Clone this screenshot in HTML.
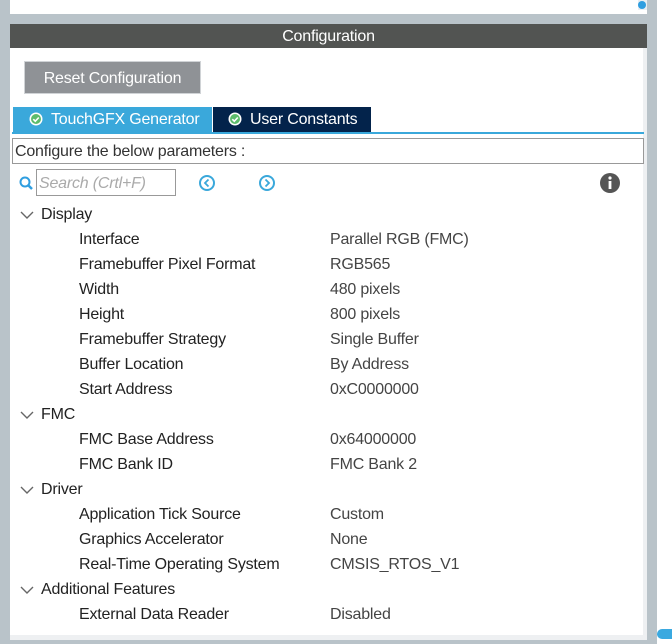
<!DOCTYPE html>
<html><head><style>
body{margin:0;width:672px;height:644px;background:#b9c3c9;position:relative;overflow:hidden;font-family:"Liberation Sans",sans-serif;}
.a{position:absolute}
.row{position:absolute;font-size:16px;color:#222;white-space:nowrap;line-height:18px;letter-spacing:-0.2px}
</style></head><body>
<div class="a" style="left:10px;top:0;width:637px;height:14px;background:#fff"></div>
<div class="a" style="left:638px;top:0;width:9px;height:10px;background:#e8eef2"></div>
<div class="a" style="left:638px;top:1px;width:8px;height:8px;border-radius:50%;background:#2f9ee0"></div>
<div class="a" style="left:657px;top:0;width:15px;height:644px;background:#fff"></div>
<div class="a" style="left:657px;top:629px;width:15px;height:10px;border-radius:5px 0 0 5px;background:#3aa9e0"></div>
<div class="a" style="left:10px;top:24px;width:637px;height:24px;background:#525452;color:#fff;font-size:16px;text-align:center;line-height:26px;letter-spacing:-0.2px">Configuration</div>
<div class="a" style="left:10px;top:48px;width:637px;height:587px;background:#fff"></div>
<div class="a" style="left:10px;top:635px;width:637px;height:5px;background:#eef0f2"></div>
<div class="a" style="left:643px;top:48px;width:4px;height:587px;background:#eef0f2"></div>
<div class="a" style="left:24px;top:61px;width:177px;height:33px;background:#8f9296;border:1px solid #d0d3d6;box-sizing:border-box;color:#fff;font-size:16px;line-height:33px;text-align:center;letter-spacing:-0.2px">Reset Configuration</div>
<div class="a" style="left:13px;top:107px;width:199px;height:25px;background:#3aa8db;color:#fff;font-size:16px;line-height:26px;letter-spacing:-0.2px"><svg width="14" height="14" style="margin:0 8px 0 16px;vertical-align:-2px"><circle cx="7" cy="7" r="6.5" fill="#fff"/><circle cx="7" cy="7" r="5" fill="#5cbc6c"/><path d="M4.3 7.2l2 2 3.5-3.7" fill="none" stroke="#fff" stroke-width="1.6"/></svg>TouchGFX Generator</div>
<div class="a" style="left:213px;top:107px;width:158px;height:25px;background:#03234b;color:#fff;font-size:16px;line-height:26px;letter-spacing:-0.2px"><svg width="14" height="14" style="margin:0 8px 0 15px;vertical-align:-2px"><circle cx="7" cy="7" r="6.5" fill="#fff"/><circle cx="7" cy="7" r="5" fill="#5cbc6c"/><path d="M4.3 7.2l2 2 3.5-3.7" fill="none" stroke="#fff" stroke-width="1.6"/></svg>User Constants</div>
<div class="a" style="left:12px;top:132px;width:632px;height:2px;background:#3aa8db"></div>
<div class="a" style="left:12px;top:138px;width:632px;height:26px;border:1px solid #999;box-sizing:border-box;font-size:16px;color:#333;line-height:26px;padding-left:2px;letter-spacing:-0.2px">Configure the below parameters :</div>
<svg class="a" style="left:19px;top:176px" width="16" height="16"><circle cx="6" cy="6" r="4.5" fill="none" stroke="#2f9ee0" stroke-width="2"/><line x1="9" y1="9" x2="13" y2="13" stroke="#2f9ee0" stroke-width="2.5"/></svg>
<div class="a" style="left:36px;top:169px;width:140px;height:27px;border:1px solid #999;box-sizing:border-box;font-size:16px;color:#aaa;font-style:italic;line-height:27px;padding-left:2px;letter-spacing:-0.2px">Search (Crtl+F)</div>
<svg class="a" style="left:198px;top:174px" width="18" height="18"><circle cx="9" cy="9" r="7" fill="none" stroke="#3aa8db" stroke-width="2"/><path d="M10.5 5.5L7 9l3.5 3.5" fill="none" stroke="#3aa8db" stroke-width="1.8"/></svg>
<svg class="a" style="left:258px;top:174px" width="18" height="18"><circle cx="9" cy="9" r="7" fill="none" stroke="#3aa8db" stroke-width="2"/><path d="M7.5 5.5L11 9l-3.5 3.5" fill="none" stroke="#3aa8db" stroke-width="1.8"/></svg>
<svg class="a" style="left:600px;top:173px" width="20" height="20"><circle cx="10" cy="10" r="10" fill="#555"/><rect x="8.6" y="8" width="2.8" height="8" fill="#fff"/><circle cx="10" cy="5" r="1.6" fill="#fff"/></svg>
<div id="t"></div>
<script>
var d=[["Display",1],["Interface","Parallel RGB (FMC)"],["Framebuffer Pixel Format","RGB565"],["Width","480 pixels"],["Height","800 pixels"],["Framebuffer Strategy","Single Buffer"],["Buffer Location","By Address"],["Start Address","0xC0000000"],["FMC",1],["FMC Base Address","0x64000000"],["FMC Bank ID","FMC Bank 2"],["Driver",1],["Application Tick Source","Custom"],["Graphics Accelerator","None"],["Real-Time Operating System","CMSIS_RTOS_V1"],["Additional Features",1],["External Data Reader","Disabled"]];
var h="";d.forEach(function(r,i){var y=206+25*i;
if(r[1]===1){h+='<svg class="a" style="left:20px;top:'+(y+5)+'px" width="14" height="9"><path d="M1 1l6 6 6-6" fill="none" stroke="#666" stroke-width="1.4"/></svg><div class="row" style="left:41px;top:'+y+'px">'+r[0]+'</div>';}
else{h+='<div class="row" style="left:79px;top:'+y+'px">'+r[0]+'</div><div class="row" style="left:330px;top:'+y+'px;color:#444">'+r[1]+'</div>';}});
document.getElementById("t").innerHTML=h;
</script>
</body></html>
